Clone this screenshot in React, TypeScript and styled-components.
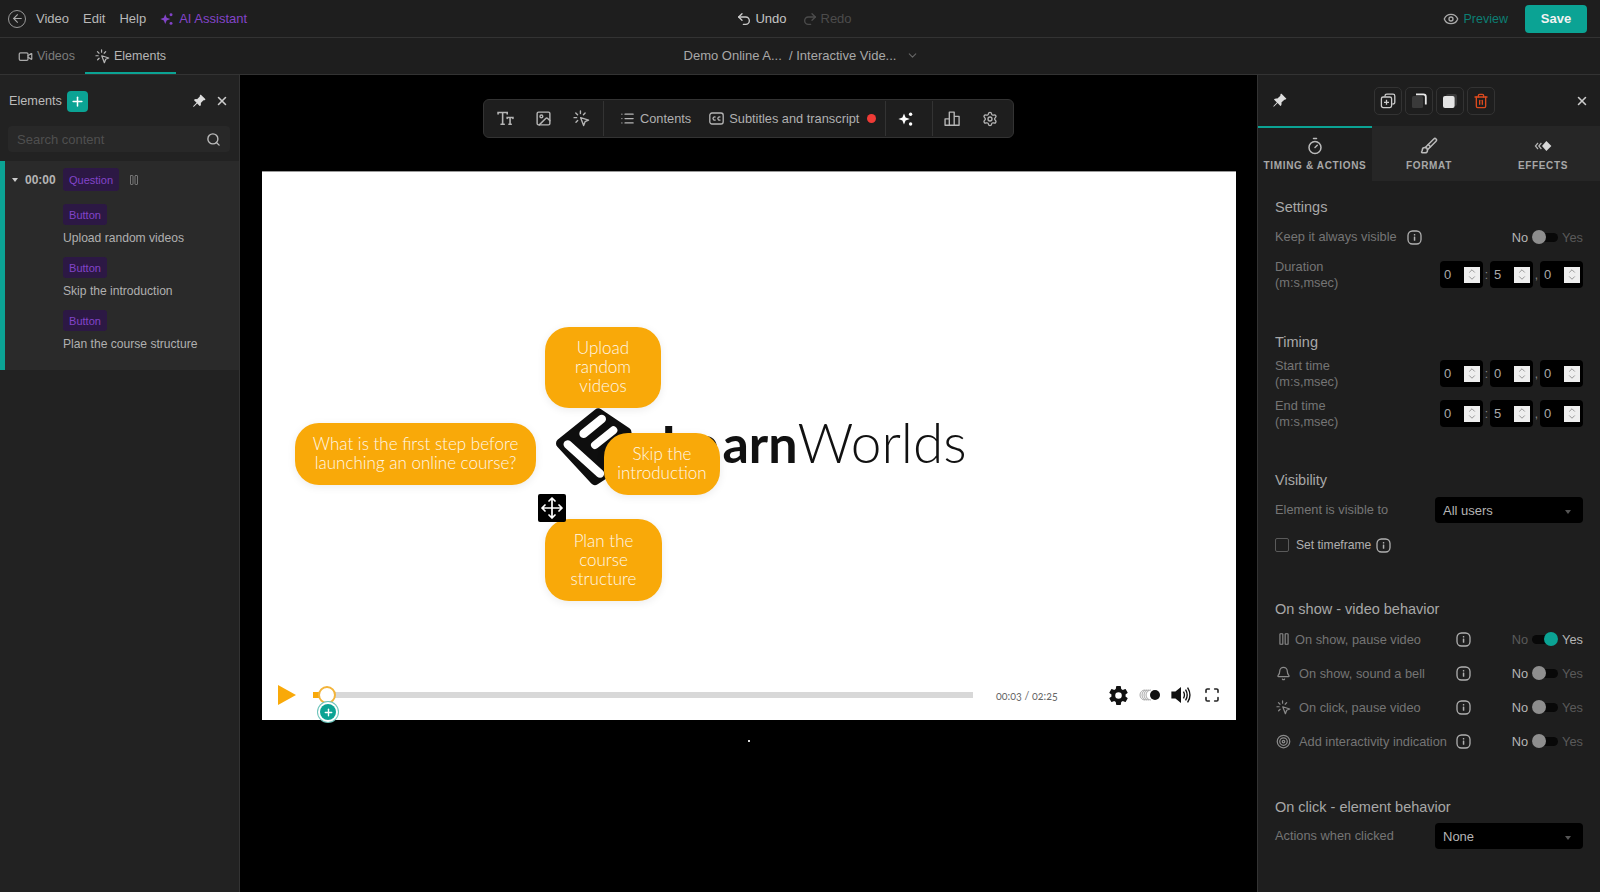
import React from 'react';
import styled, { createGlobalStyle } from 'styled-components';
import {
  ArrowLeft,
  Bell,
  Brush,
  ChevronDown,
  ChevronUp,
  Eye,
  Image as ImageIcon,
  List,
  Maximize,
  Pause,
  Plus,
  Redo2,
  Search,
  Settings,
  Target,
  Timer,
  Trash2,
  Undo2,
  Video,
  X,
} from 'lucide-react';
import { BsPinAngleFill } from 'react-icons/bs';
import { IoSettingsSharp, IoVolumeHighSharp } from 'react-icons/io5';

const GlobalStyle = createGlobalStyle`
  html, body {
    margin: 0;
    height: 892px;
    overflow: hidden;
    background: #000;
    font-family: "Liberation Sans", Arial, sans-serif;
  }
  * { box-sizing: border-box; }
`;

const TEAL = '#0ba394';
const PURPLE = '#8344c9';

const ClickIcon = ({ size = 16, color = '#b5b5b5' }: { size?: number; color?: string }) => (
  <svg width={size} height={size} viewBox="0 0 16 16" fill="none" stroke={color} strokeWidth="1.3" strokeLinecap="round">
    <path d="M7 1v2.4M2.6 2.8l1.7 1.7M11.4 2.8 9.8 4.5M1 7.2h2.4M2.8 11.5l1.6-1.6" />
    <path d="M7.2 7.2 14.6 9.6 11.4 11 10 14.6z" strokeLinejoin="round" />
  </svg>
);

const SparkIcon = ({ size = 16, color = '#fff' }: { size?: number; color?: string }) => (
  <svg width={size} height={size} viewBox="0 0 16 16" fill={color}>
    <path d="M6 2.6 7.6 6.6 11.8 8 7.6 9.6 6 13.6 4.4 9.6 .4 8 4.4 6.6z" />
    <circle cx="12.6" cy="3.2" r="1.7" />
    <circle cx="12.6" cy="13" r="1.7" />
  </svg>
);

const InfoIcon = () => (
  <svg width="15" height="15" viewBox="0 0 15 15" fill="none">
    <rect x="1" y="1" width="13" height="13" rx="4.5" stroke="#b0b0b0" strokeWidth="1.3" />
    <rect x="6.8" y="6.4" width="1.5" height="4.4" rx=".5" fill="#b0b0b0" />
    <rect x="6.8" y="3.9" width="1.5" height="1.5" rx=".5" fill="#b0b0b0" />
  </svg>
);

const TextSizeIcon = () => (
  <svg width="17" height="17" viewBox="0 0 16 16" fill="none" stroke="#b5b5b5" strokeWidth="1.5" strokeLinecap="round">
    <path d="M1 3.8V2.4h8.6v1.4M5.3 2.4v11M3.8 13.4h3M9.6 8V7h5.4v1M12.3 7v6.4M11.2 13.4h2.2" />
  </svg>
);

const CaptionsIcon = () => (
  <svg width="15" height="15" viewBox="0 0 15 15" fill="none" stroke="#b5b5b5" strokeWidth="1.3">
    <rect x=".8" y="2" width="13.4" height="11" rx="2.2" />
    <path d="M6.6 6.2a1.6 1.6 0 1 0 0 2.6M11.4 6.2a1.6 1.6 0 1 0 0 2.6" />
  </svg>
);

const BarsIcon = () => (
  <svg width="17" height="17" viewBox="0 0 16 16" fill="none" stroke="#b5b5b5" strokeWidth="1.3" strokeLinejoin="round">
    <path d="M1 14.4V8.4h4v6zM5 14.4V2h4.6v12.4zM9.6 14.4V6h4.6v8.4z" />
  </svg>
);

const EffectsIcon = () => (
  <svg width="18" height="18" viewBox="0 0 18 18" fill="none">
    <path d="M4 6 1.4 9 4 12M7.4 6 4.8 9l2.6 3" stroke="#b5b5b5" strokeWidth="1.2" />
    <path d="M12.4 4 17.4 9l-5 5L8 9z" fill="#d8d8d8" />
  </svg>
);

const DuplicateIcon = () => (
  <svg width="16" height="16" viewBox="0 0 16 16" fill="none" stroke="#ccc" strokeWidth="1.3">
    <path d="M5 3.6V3a1.8 1.8 0 0 1 1.8-1.8H13A1.8 1.8 0 0 1 14.8 3v6.2A1.8 1.8 0 0 1 13 11h-.6" />
    <rect x="1.4" y="4" width="10.2" height="10.6" rx="1.8" />
    <path d="M6.5 6.8v5M4 9.3h5" />
  </svg>
);

const FrontIcon = () => (
  <svg width="16" height="16" viewBox="0 0 16 16">
    <rect x="1" y="3" width="11" height="12" rx="1.5" fill="#3a3a3a" />
    <path d="M5 1.4h7.4a2.4 2.4 0 0 1 2.4 2.4v7.6" fill="none" stroke="#e8e8e8" strokeWidth="1.8" />
  </svg>
);

const BackIcon = () => (
  <svg width="16" height="16" viewBox="0 0 16 16">
    <rect x="4" y="1" width="11" height="12" rx="2" fill="#3a3a3a" />
    <rect x="1" y="3" width="11.6" height="12" rx="2" fill="#e4e4e4" />
  </svg>
);

const SpeedIcon = () => (
  <svg width="22" height="12" viewBox="0 0 22 12" fill="none" stroke="#a8a8a8" strokeWidth="1">
    <path d="M6 1A5 5 0 0 0 6 11M8 1A5 5 0 0 0 8 11M10 1A5 5 0 0 0 10 11M12 1A5 5 0 0 0 12 11" />
    <circle cx="16" cy="6" r="5" fill="#111" stroke="none" />
  </svg>
);

const LogoMark = () => (
  <LogoSvg viewBox="0 0 360 300">
    <path d="M48 145 160 55 245 112 235 200 150 255z" fill="#0e0e0e" stroke="#0e0e0e" strokeWidth="30" strokeLinejoin="round" />
    <g fill="none" stroke="#fff" strokeLinecap="round">
      <path d="M68 148 165 236" strokeWidth="25" />
      <path d="M116 116 170 72" strokeWidth="26" />
      <path d="M150 150 205 106" strokeWidth="24" />
    </g>
  </LogoSvg>
);

const NumberField = ({ value }: { value: string }) => (
  <Field>
    {value}
    <Spinner>
      <ChevronUp size={10} color="#888" />
      <ChevronDown size={10} color="#888" />
    </Spinner>
  </Field>
);

const TimeFields = ({ values }: { values: [string, string, string] }) => (
  <Fields>
    <NumberField value={values[0]} />
    <Sep>:</Sep>
    <NumberField value={values[1]} />
    <Sep>,</Sep>
    <NumberField value={values[2]} />
  </Fields>
);

const Toggle = ({ on = false }: { on?: boolean }) => (
  <ToggleWrap>
    <ToggleText $lit={!on}>No</ToggleText>
    <Track $on={on}>
      <Knob $on={on} />
    </Track>
    <ToggleText $lit={on}>Yes</ToggleText>
  </ToggleWrap>
);

const BehaviorRow = ({
  icon,
  label,
  on,
  gap = 7,
  top = 14,
}: {
  icon: React.ReactNode;
  label: string;
  on?: boolean;
  gap?: number;
  top?: number;
}) => (
  <Row $top={top}>
    <BehaviorIcon $gap={gap}>{icon}</BehaviorIcon>
    <BehaviorLabel $width={164 - gap}>{label}</BehaviorLabel>
    <InfoIcon />
    <Toggle on={on} />
  </Row>
);

const Select = ({ value }: { value: string }) => (
  <SelectBox>
    {value}
    <Caret />
  </SelectBox>
);

const App = () => {
  return (
    <Page>
      <GlobalStyle />
      <TopBar>
        <BarLeft>
          <BackCircle>
            <ArrowLeft size={13} color="#aaa" />
          </BackCircle>
          <MenuItem>Video</MenuItem>
          <MenuItem>Edit</MenuItem>
          <MenuItem>Help</MenuItem>
          <AiItem>
            <SparkIcon size={14} color={PURPLE} />
            AI Assistant
          </AiItem>
        </BarLeft>
        <BarCenter>
          <HistoryItem>
            <Undo2 size={16} color="#ccc" />
            Undo
          </HistoryItem>
          <HistoryItem $off>
            <Redo2 size={16} color="#4c4c4c" />
            Redo
          </HistoryItem>
        </BarCenter>
        <BarRight>
          <PreviewLink>
            <Eye size={16} color="#aaa" />
            Preview
          </PreviewLink>
          <SaveButton>Save</SaveButton>
        </BarRight>
      </TopBar>

      <SubBar>
        <Tabs>
          <NavTab>
            <Video size={15} color="#aaa" />
            Videos
          </NavTab>
          <NavTab $active>
            <ClickIcon size={15} />
            Elements
          </NavTab>
        </Tabs>
        <Breadcrumb>
          Demo Online A...&nbsp; / Interactive Vide...
          <ChevronDown size={13} color="#666" />
        </Breadcrumb>
      </SubBar>

      <Main>
        <LeftPanel>
          <LeftHead>
            <LeftTitle>Elements</LeftTitle>
            <AddButton>
              <Plus size={15} color="#fff" strokeWidth={2.4} />
            </AddButton>
            <HeadActions>
              <BsPinAngleFill size={14} color="#ddd" />
              <X size={14} color="#ccc" strokeWidth={2.6} />
            </HeadActions>
          </LeftHead>
          <SearchBox>
            Search content
            <Search size={15} color="#bbb" strokeWidth={2.2} />
          </SearchBox>
          <ElementList>
            <QuestionRow>
              <TriCaret />
              <TimeStamp>00:00</TimeStamp>
              <Tag $big>Question</Tag>
              <Pause size={12} color="#777" />
            </QuestionRow>
            <Tag>Button</Tag>
            <ElementName>Upload random videos</ElementName>
            <Tag>Button</Tag>
            <ElementName>Skip the introduction</ElementName>
            <Tag>Button</Tag>
            <ElementName>Plan the course structure</ElementName>
          </ElementList>
        </LeftPanel>

        <Center>
          <Toolbar>
            <ToolGroup $pad="0 3px 0 0">
              <ToolIcon>
                <TextSizeIcon />
              </ToolIcon>
              <ToolIcon>
                <ImageIcon size={17} color="#b5b5b5" />
              </ToolIcon>
              <ToolIcon>
                <ClickIcon size={17} />
              </ToolIcon>
            </ToolGroup>
            <ToolGroup $pad="0 9px 0 16px" $gap={18}>
              <ToolText>
                <List size={15} color="#b5b5b5" />
                Contents
              </ToolText>
              <ToolText>
                <CaptionsIcon />
                Subtitles and transcript
                <RedDot />
              </ToolText>
            </ToolGroup>
            <ToolGroup $pad="0 7px 0 1px">
              <ToolIcon>
                <SparkIcon size={16} />
              </ToolIcon>
            </ToolGroup>
            <ToolGroup $pad="0" $plain>
              <ToolIcon>
                <BarsIcon />
              </ToolIcon>
              <ToolIcon>
                <Settings size={16} color="#b5b5b5" />
              </ToolIcon>
            </ToolGroup>
          </Toolbar>

          <VideoFrame>
            <Stage>
              <LogoMark />
              <LogoText>
                <b>
                  <i>Le</i>arn
                </b>
                Worlds
              </LogoText>
              <Bubble $x={283} $y={155} $w={116} $h={81}>
                Upload random videos
              </Bubble>
              <Bubble $x={33} $y={251} $w={241} $h={62}>
                What is the first step before launching an online course?
              </Bubble>
              <Bubble $x={342} $y={261} $w={116} $h={62}>
                Skip the introduction
              </Bubble>
              <Bubble $x={283} $y={347} $w={117} $h={82}>
                Plan the course structure
              </Bubble>
              <MoveHandle>
                <svg width="24" height="24" viewBox="0 0 24 24" fill="none" stroke="#fff" strokeWidth="1.7" strokeLinecap="round" strokeLinejoin="round">
                  <path d="M12 2v20M2 12h20M9 5l3-3 3 3M9 19l3 3 3-3M5 9l-3 3 3 3M19 9l3 3-3 3" />
                </svg>
              </MoveHandle>
            </Stage>
            <Controls>
              <PlayTriangle />
              <SeekBar>
                <SeekFill />
                <SeekKnob />
                <AddMarker>
                  <Plus size={11} color="#fff" strokeWidth={3} />
                </AddMarker>
              </SeekBar>
              <TimeCode>00:03 / 02:25</TimeCode>
              <ControlIcon>
                <IoSettingsSharp size={21} color="#111" />
              </ControlIcon>
              <ControlIcon>
                <SpeedIcon />
              </ControlIcon>
              <ControlIcon>
                <IoVolumeHighSharp size={22} color="#111" />
              </ControlIcon>
              <ControlIcon>
                <Maximize size={16} color="#222" strokeWidth={2.4} />
              </ControlIcon>
            </Controls>
          </VideoFrame>
          <CenterDot />
        </Center>

        <RightPanel>
          <RightHead>
            <BsPinAngleFill size={15} color="#ddd" />
            <LayerButtons>
              <LayerButton>
                <DuplicateIcon />
              </LayerButton>
              <LayerButton>
                <FrontIcon />
              </LayerButton>
              <LayerButton>
                <BackIcon />
              </LayerButton>
              <LayerButton>
                <Trash2 size={16} color="#dc4a1e" />
              </LayerButton>
            </LayerButtons>
            <X size={14} color="#ccc" strokeWidth={2.6} />
          </RightHead>
          <PropTabs>
            <PropTab $active>
              <Timer size={18} color="#bbb" />
              TIMING &amp; ACTIONS
            </PropTab>
            <PropTab>
              <Brush size={18} color="#bbb" />
              FORMAT
            </PropTab>
            <PropTab>
              <EffectsIcon />
              EFFECTS
            </PropTab>
          </PropTabs>

          <PanelBody>
            <SectionTitle $top={17}>Settings</SectionTitle>
            <Row $top={11}>
              <Label $width={132}>Keep it always visible</Label>
              <InfoIcon />
              <Toggle />
            </Row>
            <SplitRow $top={12}>
              <Label>
                Duration
                <br />
                (m:s,msec)
              </Label>
              <TimeFields values={['0', '5', '0']} />
            </SplitRow>

            <SectionTitle $top={43}>Timing</SectionTitle>
            <SplitRow $top={7}>
              <Label>
                Start time
                <br />
                (m:s,msec)
              </Label>
              <TimeFields values={['0', '0', '0']} />
            </SplitRow>
            <SplitRow $top={9}>
              <Label>
                End time
                <br />
                (m:s,msec)
              </Label>
              <TimeFields values={['0', '5', '0']} />
            </SplitRow>

            <SectionTitle $top={42}>Visibility</SectionTitle>
            <SplitRow $top={8}>
              <Label>Element is visible to</Label>
              <Select value="All users" />
            </SplitRow>
            <CheckRow>
              <CheckBox />
              <CheckLabel>Set timeframe</CheckLabel>
              <InfoIcon />
            </CheckRow>

            <SectionTitle $top={48}>On show - video behavior</SectionTitle>
            <BehaviorRow icon={<Pause size={14} color="#8a8a8a" />} label="On show, pause video" gap={3} top={11} on />
            <BehaviorRow icon={<Bell size={15} color="#8a8a8a" />} label="On show, sound a bell" />
            <BehaviorRow icon={<ClickIcon size={15} color="#8a8a8a" />} label="On click, pause video" />
            <BehaviorRow icon={<Target size={15} color="#8a8a8a" />} label="Add interactivity indication" />

            <SectionTitle $top={47}>On click - element behavior</SectionTitle>
            <SplitRow $top={7}>
              <Label>Actions when clicked</Label>
              <Select value="None" />
            </SplitRow>
          </PanelBody>
        </RightPanel>
      </Main>
    </Page>
  );
};

const Page = styled.div`
  display: flex;
  flex-direction: column;
  width: 1600px;
  height: 892px;
  background: #000;
  color: #bbb;
  font-size: 13px;
`;

const TopBar = styled.header`
  display: grid;
  grid-template-columns: 1fr auto 1fr;
  align-items: center;
  height: 38px;
  padding: 0 13px 0 8px;
  background: #1e1e1e;
  border-bottom: 1px solid #333;
`;

const BarLeft = styled.div`
  display: flex;
  align-items: center;
  gap: 14px;
`;

const BackCircle = styled.div`
  display: flex;
  align-items: center;
  justify-content: center;
  width: 18px;
  height: 18px;
  margin-right: -4px;
  border: 1.4px solid #999;
  border-radius: 50%;
`;

const MenuItem = styled.span`
  font-size: 13px;
  color: #b8b8b8;
`;

const AiItem = styled.span`
  display: flex;
  align-items: center;
  gap: 5px;
  font-size: 13px;
  color: ${PURPLE};
`;

const BarCenter = styled.div`
  display: flex;
  align-items: center;
  gap: 15px;
  margin-left: -7px;
`;

const HistoryItem = styled.span<{ $off?: boolean }>`
  display: flex;
  align-items: center;
  gap: 3px;
  font-size: 13px;
  color: ${(p) => (p.$off ? '#4c4c4c' : '#c4c4c4')};
`;

const BarRight = styled.div`
  display: flex;
  align-items: center;
  justify-content: flex-end;
  gap: 17px;
`;

const PreviewLink = styled.span`
  display: flex;
  align-items: center;
  gap: 5px;
  font-size: 12.5px;
  color: #0c7f74;
`;

const SaveButton = styled.button`
  width: 62px;
  height: 28px;
  border: 0;
  border-radius: 4px;
  background: ${TEAL};
  color: #f2f2f2;
  font: 700 13px "Liberation Sans", Arial, sans-serif;
`;

const SubBar = styled.div`
  display: grid;
  grid-template-columns: 1fr auto 1fr;
  align-items: stretch;
  height: 37px;
  background: #1e1e1e;
  border-bottom: 1px solid #333;
`;

const Tabs = styled.nav`
  display: flex;
  padding-left: 8px;
`;

const NavTab = styled.div<{ $active?: boolean }>`
  display: flex;
  align-items: center;
  gap: 4px;
  padding: 2px 10px 0;
  font-size: 12.5px;
  color: ${(p) => (p.$active ? '#b5b5b5' : '#7c7c7c')};
  border-bottom: 2px solid ${(p) => (p.$active ? TEAL : 'transparent')};
`;

const Breadcrumb = styled.div`
  display: flex;
  align-items: center;
  gap: 10px;
  margin: -1px 0 0 3px;
  font-size: 13px;
  color: #a8a8a8;
`;

const Main = styled.main`
  display: flex;
  flex: 1;
  min-height: 0;
`;

const LeftPanel = styled.aside`
  display: flex;
  flex-direction: column;
  width: 240px;
  background: #222;
  border-right: 1px solid #333;
`;

const LeftHead = styled.div`
  display: flex;
  align-items: center;
  height: 51px;
  padding: 1px 10px 0 9px;
`;

const LeftTitle = styled.span`
  font-size: 12.7px;
  color: #bbb;
`;

const AddButton = styled.span`
  display: flex;
  align-items: center;
  justify-content: center;
  width: 21px;
  height: 21px;
  margin-left: 5px;
  border-radius: 4px;
  background: ${TEAL};
`;

const HeadActions = styled.div`
  display: flex;
  align-items: center;
  gap: 9px;
  margin-left: auto;
`;

const SearchBox = styled.div`
  display: flex;
  align-items: center;
  justify-content: space-between;
  height: 26px;
  margin: 0 9px 0 8px;
  padding: 0 9px;
  border-radius: 4px;
  background: #282828;
  font-size: 13px;
  color: #4f4f4f;
`;

const ElementList = styled.div`
  display: flex;
  flex-direction: column;
  align-items: flex-start;
  height: 209px;
  margin-top: 9px;
  padding-left: 58px;
  border-left: 5px solid ${TEAL};
  background: #2a2a2a;
`;

const QuestionRow = styled.div`
  display: flex;
  align-items: center;
  height: 23px;
  margin: 7px 0 13px -51px;
`;

const TriCaret = styled.span`
  width: 0;
  height: 0;
  margin-right: 7px;
  border-left: 3.5px solid transparent;
  border-right: 3.5px solid transparent;
  border-top: 4px solid #ccc;
`;

const TimeStamp = styled.span`
  width: 38px;
  font-size: 12px;
  font-weight: 700;
  color: #b5b5b5;
`;

const Tag = styled.span<{ $big?: boolean }>`
  display: inline-flex;
  align-items: center;
  justify-content: center;
  width: ${(p) => (p.$big ? '56px' : '44px')};
  height: ${(p) => (p.$big ? '23px' : '21px')};
  margin-right: ${(p) => (p.$big ? '9px' : '0')};
  border-radius: 3px;
  background: #2c1844;
  font-size: 11px;
  color: ${PURPLE};
`;

const ElementName = styled.div`
  height: 32px;
  padding-top: 6px;
  font-size: 12.1px;
  color: #b0b0b0;
`;

const Center = styled.section`
  position: relative;
  display: flex;
  flex-direction: column;
  align-items: center;
  flex: 1;
  background: #000;
`;

const Toolbar = styled.div`
  display: flex;
  align-items: center;
  width: 531px;
  height: 39px;
  margin-top: 24px;
  padding-left: 2px;
  border: 1px solid #333;
  border-radius: 6px;
  background: #1e1e1e;
`;

const ToolGroup = styled.div<{ $pad: string; $gap?: number; $plain?: boolean }>`
  display: flex;
  align-items: center;
  gap: ${(p) => p.$gap ?? 0}px;
  height: 35px;
  padding: ${(p) => p.$pad};
  border-right: ${(p) => (p.$plain ? '0' : '1px solid #333')};
`;

const ToolIcon = styled.span`
  display: flex;
  align-items: center;
  justify-content: center;
  width: 38px;
`;

const ToolText = styled.span`
  display: flex;
  align-items: center;
  gap: 5px;
  font-size: 12.8px;
  color: #b0b0b0;
  white-space: nowrap;
`;

const RedDot = styled.span`
  width: 9px;
  height: 9px;
  margin-left: 3px;
  border-radius: 50%;
  background: #ef3b36;
`;

const VideoFrame = styled.div`
  display: flex;
  flex-direction: column;
  width: 974px;
  height: 549px;
  margin: 33px 0 0 1px;
  background: #fff;
  border-top: 1px solid #999;
`;

const Stage = styled.div`
  position: relative;
  flex: 1;
`;

const LogoSvg = styled.svg`
  position: absolute;
  left: 283px;
  top: 223px;
  width: 120px;
  height: 100px;
`;

const LogoText = styled.div`
  position: absolute;
  left: 399px;
  top: 238px;
  font: 300 55px/64px Lato, sans-serif;
  color: #111;
  white-space: nowrap;

  b {
    font-size: 52px;
    font-weight: 700;
  }

  i {
    font-style: normal;
    letter-spacing: 4px;
  }
`;

const Bubble = styled.div<{ $x: number; $y: number; $w: number; $h: number }>`
  position: absolute;
  left: ${(p) => p.$x}px;
  top: ${(p) => p.$y}px;
  display: flex;
  align-items: center;
  justify-content: center;
  width: ${(p) => p.$w}px;
  height: ${(p) => p.$h}px;
  padding: 0 12px 2px;
  border-radius: 24px;
  background: #f9a909;
  box-shadow: 0 2px 8px rgba(0, 0, 0, 0.08);
  font: 300 17px/19px Lato, sans-serif;
  text-align: center;
  color: #fff8ea;
`;

const MoveHandle = styled.div`
  position: absolute;
  left: 276px;
  top: 322px;
  display: flex;
  align-items: center;
  justify-content: center;
  width: 28px;
  height: 28px;
  border-radius: 2px;
  background: #000;
`;

const Controls = styled.div`
  display: flex;
  align-items: center;
  height: 50px;
  padding-left: 16px;
  flex-shrink: 0;
`;

const PlayTriangle = styled.span`
  width: 0;
  height: 0;
  margin-right: 17px;
  border-top: 10px solid transparent;
  border-bottom: 10px solid transparent;
  border-left: 18px solid #f9a909;
`;

const SeekBar = styled.div`
  position: relative;
  width: 660px;
  height: 6px;
  background: #d8d8d8;
`;

const SeekFill = styled.div`
  width: 12px;
  height: 6px;
  background: #f9a909;
`;

const SeekKnob = styled.div`
  position: absolute;
  left: 5px;
  top: -6px;
  width: 18px;
  height: 18px;
  border: 2px solid #f3b43a;
  border-radius: 50%;
  background: #fff;
`;

const AddMarker = styled.div`
  position: absolute;
  left: 7px;
  top: 12px;
  display: flex;
  align-items: center;
  justify-content: center;
  width: 16px;
  height: 16px;
  border-radius: 50%;
  background: ${TEAL};
  box-shadow: 0 0 0 2px #fff, 0 0 0 3px #6cc4bb;
`;

const TimeCode = styled.span`
  width: 107px;
  margin-left: 23px;
  font: 400 10.7px Lato, sans-serif;
  font-variant-numeric: oldstyle-nums;
  color: #666;
`;

const ControlIcon = styled.span`
  display: flex;
  align-items: center;
  justify-content: center;
  width: 31px;
`;

const CenterDot = styled.span`
  width: 2px;
  height: 2px;
  margin-top: 20px;
  background: #ddd;
`;

const RightPanel = styled.aside`
  display: flex;
  flex-direction: column;
  width: 343px;
  background: #1e1e1e;
  border-left: 1px solid #333;
`;

const RightHead = styled.div`
  display: flex;
  align-items: center;
  height: 51px;
  padding: 0 11px 0 14px;
`;

const LayerButtons = styled.div`
  display: flex;
  gap: 3px;
  margin: 0 auto 0 87px;
`;

const LayerButton = styled.span`
  display: flex;
  align-items: center;
  justify-content: center;
  width: 28px;
  height: 28px;
  border: 1px solid #333;
  border-radius: 5px;
`;

const PropTabs = styled.div`
  display: flex;
  height: 55px;
  background: #262626;
`;

const PropTab = styled.div<{ $active?: boolean }>`
  display: flex;
  flex-direction: column;
  align-items: center;
  justify-content: center;
  gap: 5px;
  width: 114px;
  padding-bottom: 2px;
  background: ${(p) => (p.$active ? '#1e1e1e' : 'transparent')};
  border-top: 2px solid ${(p) => (p.$active ? TEAL : 'transparent')};
  font-size: 10px;
  font-weight: 700;
  letter-spacing: 0.65px;
  color: #a8a8a8;
  white-space: nowrap;
`;

const PanelBody = styled.div`
  padding: 0 17px;
`;

const SectionTitle = styled.h3<{ $top: number }>`
  margin: ${(p) => p.$top}px 0 0;
  font-size: 14.5px;
  font-weight: 400;
  line-height: 18px;
  color: #a8a8a8;
`;

const Row = styled.div<{ $top: number }>`
  display: flex;
  align-items: center;
  height: 20px;
  margin-top: ${(p) => p.$top}px;
`;

const SplitRow = styled.div<{ $top: number }>`
  display: flex;
  align-items: center;
  justify-content: space-between;
  margin-top: ${(p) => p.$top}px;
`;

const Label = styled.div<{ $width?: number }>`
  ${(p) => (p.$width ? `width: ${p.$width}px;` : '')}
  font-size: 12.8px;
  line-height: 15.5px;
  color: #757575;
`;

const BehaviorIcon = styled.span<{ $gap: number }>`
  display: flex;
  justify-content: center;
  width: 17px;
  margin-right: ${(p) => p.$gap}px;
`;

const BehaviorLabel = styled.span<{ $width: number }>`
  width: ${(p) => p.$width}px;
  font-size: 12.8px;
  color: #757575;
  white-space: nowrap;
`;

const ToggleWrap = styled.div`
  display: flex;
  align-items: center;
  margin-left: auto;
`;

const ToggleText = styled.span<{ $lit: boolean }>`
  font-size: 12.8px;
  color: ${(p) => (p.$lit ? '#b5b5b5' : '#5a5a5a')};
`;

const Track = styled.span<{ $on: boolean }>`
  display: flex;
  align-items: center;
  justify-content: ${(p) => (p.$on ? 'flex-end' : 'flex-start')};
  width: 26px;
  height: 9px;
  margin: 0 4px;
  border-radius: 5px;
  background: #080808;
`;

const Knob = styled.span<{ $on: boolean }>`
  width: 14px;
  height: 14px;
  border-radius: 50%;
  flex-shrink: 0;
  background: ${(p) => (p.$on ? TEAL : '#8e8e8e')};
`;

const Fields = styled.div`
  display: flex;
  align-items: center;
`;

const Field = styled.div`
  display: flex;
  align-items: center;
  justify-content: space-between;
  width: 43px;
  height: 27px;
  padding: 0 3px 0 4px;
  border-radius: 4px;
  background: #000;
  font-size: 13px;
  color: #aaa;
`;

const Spinner = styled.span`
  display: flex;
  flex-direction: column;
  align-items: center;
  justify-content: center;
  width: 16px;
  height: 16px;
  background: #eee;

  svg {
    margin: -1.5px 0;
  }
`;

const Sep = styled.span`
  width: 7px;
  text-align: center;
  font-size: 12px;
  color: #888;
`;

const SelectBox = styled.div`
  display: flex;
  align-items: center;
  justify-content: space-between;
  width: 148px;
  height: 26px;
  padding: 0 12px 0 8px;
  border-radius: 4px;
  background: #000;
  font-size: 13px;
  color: #b5b5b5;
`;

const Caret = styled.span`
  width: 0;
  height: 0;
  margin-top: 3px;
  border-left: 3.5px solid transparent;
  border-right: 3.5px solid transparent;
  border-top: 4px solid #555;
`;

const CheckRow = styled.div`
  display: flex;
  align-items: center;
  gap: 5px;
  height: 14px;
  margin-top: 15px;
`;

const CheckBox = styled.span`
  width: 14px;
  height: 14px;
  margin-right: 2px;
  border: 1px solid #5a5a5a;
  border-radius: 2px;
`;

const CheckLabel = styled.span`
  font-size: 12.1px;
  color: #b0b0b0;
`;

export default App;
